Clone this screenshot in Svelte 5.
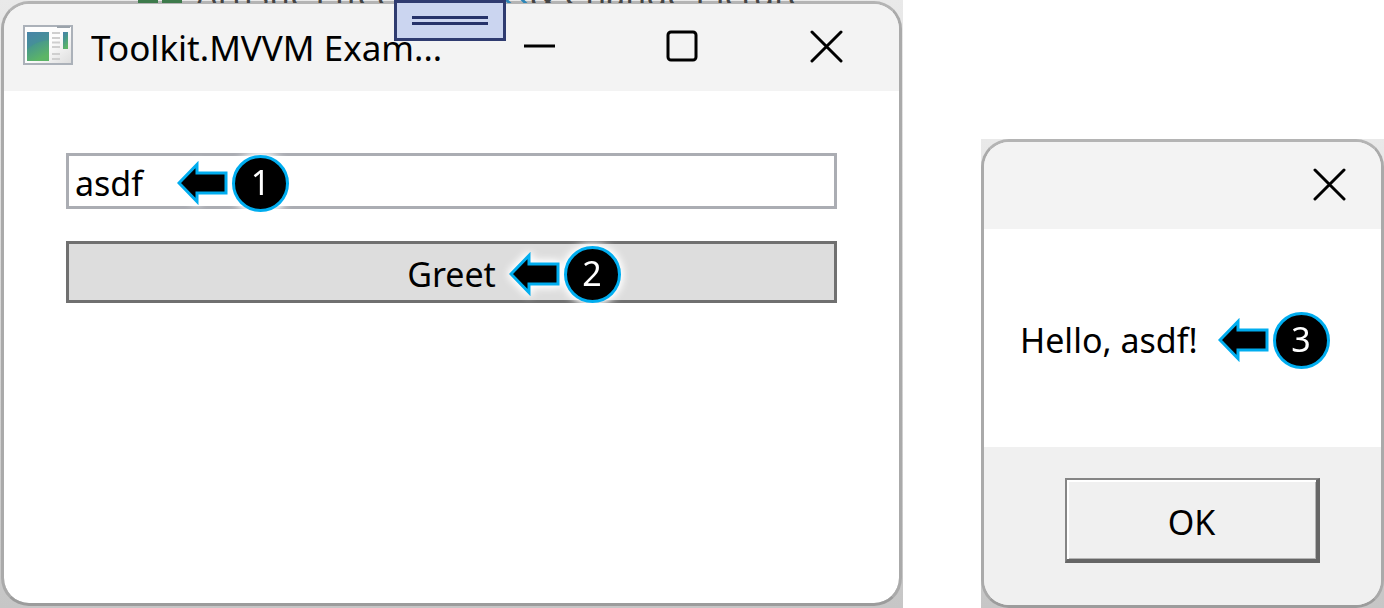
<script lang="ts">
  let name = $state("asdf");
  let greeting = $derived(`Hello, ${name}!`);
</script>

{#snippet closeIcon()}
  <svg width="34" height="34" viewBox="0 0 34 34" fill="none" stroke="#000" stroke-width="3" stroke-linecap="round">
    <path d="M3 2l29 29M32 2L3 31" />
  </svg>
{/snippet}

{#snippet callout(step: number)}
  <span class="callout">
    <svg width="52" height="46" viewBox="0 0 52 46">
      <path d="M2 23L20 4.500V13H49V33H20V41.500Z" fill="#000" stroke="#00adef" stroke-width="3" />
    </svg>
    <span class="step">{step}</span>
  </span>
{/snippet}

<main class="stage">
  <div class="frame">
    <div class="ribbon" aria-hidden="true">
      <span class="tile"></span>
      <span class="tile"></span>
      <span class="ribbon-text effects">Artistic Effects</span>
      <span class="swoosh"></span>
      <span class="ribbon-text">&amp; Change Picture</span>
    </div>
    <section class="window">
      <div class="grip">
        <span></span>
        <span></span>
      </div>
      <header class="titlebar">
        <svg class="app-icon" width="50" height="42" viewBox="0 0 50 42">
          <defs>
            <linearGradient id="pane" x1="0" y1="0" x2="0.4" y2="1">
              <stop offset="0" stop-color="#4a7fae" />
              <stop offset="0.45" stop-color="#46968f" />
              <stop offset="1" stop-color="#5cb566" />
            </linearGradient>
            <linearGradient id="sheet" x1="0" y1="0" x2="1" y2="1">
              <stop offset="0.5" stop-color="#fdfdfd" />
              <stop offset="1" stop-color="#dcdcdc" />
            </linearGradient>
          </defs>
          <rect x="1" y="1" width="48" height="38" fill="url(#sheet)" stroke="#abb1b9" stroke-width="2" />
          <path d="M34 2h13" stroke="#9ba3ab" stroke-width="2" />
          <rect x="4" y="7" width="22" height="29" fill="url(#pane)" />
          <path d="M4 24Q13 16 26 15V7H4Z" fill="#4688a4" opacity="0.5" />
          <path d="M29 8h8M29 13h8M29 17.500h8M29 22h8M29 29h8M29 34h8" stroke="#cfcfcf" stroke-width="2" />
          <rect x="40" y="7" width="5" height="17" fill="url(#pane)" />
        </svg>
        <h1>Toolkit.MVVM Exam...</h1>
        <button class="caption" aria-label="Minimize">
          <svg width="34" height="34" viewBox="0 0 34 34"><path d="M1 16h31" stroke="#000" stroke-width="3" /></svg>
        </button>
        <button class="caption" aria-label="Maximize">
          <svg width="34" height="34" viewBox="0 0 34 34" fill="none">
            <rect x="2" y="2" width="28" height="28" rx="3" stroke="#000" stroke-width="3" />
          </svg>
        </button>
        <button class="caption" aria-label="Close">{@render closeIcon()}</button>
      </header>
      <div class="form">
        <div class="field">
          <input type="text" aria-label="Name" bind:value={name} />
          <div class="mark mark-input">{@render callout(1)}</div>
        </div>
        <div class="field">
          <button class="greet">Greet</button>
          <div class="mark mark-greet">{@render callout(2)}</div>
        </div>
      </div>
    </section>
  </div>

  <div class="frame dialog-frame">
    <section class="window" role="dialog" aria-label="Greeting">
      <header class="titlebar dialog-bar">
        <button class="caption dialog-close" aria-label="Close">{@render closeIcon()}</button>
      </header>
      <div class="message">
        <p>{greeting}</p>
        {@render callout(3)}
      </div>
      <footer>
        <button class="ok">OK</button>
      </footer>
    </section>
  </div>
</main>

<style>
  :global(body) {
    background: #fff;
  }

  .stage {
    display: grid;
    grid-template-columns: 903fr 403fr;
    column-gap: 78px;
    align-items: end;
    min-height: 100vh;
    font-family: "Segoe UI", "Noto Sans", "Open Sans", sans-serif;
    font-size: 34px;
    line-height: 46px;
    color: #000;
  }

  .stage * {
    box-sizing: border-box;
  }

  .frame {
    position: relative;
    display: flex;
    align-self: stretch;
    padding: 1px 1px 2px;
    background: linear-gradient(#e9e9e9, #c6c6c6);
  }

  .dialog-frame {
    align-self: end;
    padding: 0;
  }

  .window {
    position: relative;
    flex: 1;
    display: flex;
    flex-direction: column;
    min-width: 0;
    border: 3px solid;
    border-color: #b4b4b4 #aaa #9c9c9c;
    border-radius: 28px;
    background: #fff;
    background-clip: padding-box;
  }

  /* sliver of the application behind the window */
  .ribbon {
    position: absolute;
    inset: 0 0 auto;
    z-index: 1;
    height: 3px;
    padding-left: 138px;
    display: flex;
    align-items: flex-end;
    gap: 4px;
    overflow: hidden;
  }

  .tile {
    width: 20px;
    height: 3px;
    background: #3d7a4b;
  }

  .ribbon-text {
    margin-bottom: -11px;
    color: #444;
    font-size: 34px;
    line-height: 40px;
    white-space: nowrap;
  }

  .effects {
    margin-left: 10px;
    width: 306px;
  }

  .swoosh {
    width: 20px;
    height: 3px;
    border: solid #2c86b8;
    border-width: 0 4px;
    transform: skewX(45deg);
  }

  .grip {
    position: absolute;
    top: -4px;
    left: 50%;
    z-index: 2;
    transform: translateX(-50%);
    display: flex;
    flex-direction: column;
    justify-content: center;
    gap: 3px;
    width: 112px;
    height: 41px;
    margin-left: -2px;
    padding: 0 15px;
    border: 3px solid #2f3b70;
    background: #cbd5f0;
  }

  .grip span {
    height: 3px;
    background: #26336a;
  }

  .titlebar {
    display: flex;
    align-items: center;
    height: 87px;
    padding: 0 2px 0 19px;
    border-radius: 25px 25px 0 0;
    background: #f3f3f3;
  }

  .app-icon {
    flex: none;
    margin-right: 18px;
    margin-bottom: 4px;
  }

  h1 {
    flex: 1;
    min-width: 0;
    margin: 0;
    overflow: hidden;
    font-size: 35px;
    font-weight: 400;
    white-space: nowrap;
  }

  button,
  input {
    font: inherit;
    color: inherit;
    border-radius: 0;
  }

  .caption {
    display: grid;
    place-items: center;
    flex: none;
    width: 143px;
    height: 100%;
    padding: 0 0 2px;
    border: 0;
    background: none;
  }

  .form {
    display: flex;
    flex-direction: column;
    gap: 32px;
    padding: 62px;
  }

  .field {
    position: relative;
    display: flex;
  }

  input {
    width: 100%;
    height: 56px;
    padding: 4px 6px 0;
    border: 3px solid #abadb3;
    background: #fff;
    outline: none;
  }

  .greet {
    width: 100%;
    height: 62px;
    padding: 4px 0 0;
    border: 3px solid #707070;
    background: #ddd;
  }

  .mark {
    position: absolute;
    inset: 4px auto 0;
    display: flex;
    align-items: center;
    pointer-events: none;
  }

  .mark-input {
    left: 111px;
  }

  .mark-greet {
    left: calc(50% + 57px);
  }

  .callout {
    display: flex;
    align-items: center;
    gap: 3px;
    filter: drop-shadow(0 0 4px #fff) drop-shadow(0 0 3px #fff);
  }

  .step {
    display: grid;
    place-items: center;
    width: 57px;
    height: 57px;
    padding-bottom: 2px;
    border: 3px solid #00adef;
    border-radius: 50%;
    background: #000;
    color: #fff;
    font-size: 34px;
  }

  .dialog-bar {
    justify-content: flex-end;
    padding: 0;
  }

  .dialog-close {
    width: 104px;
  }

  .message {
    display: flex;
    align-items: center;
    gap: 20px;
    height: 218px;
    padding: 4px 36px 0;
  }

  p {
    margin: 0;
    white-space: nowrap;
  }

  footer {
    display: flex;
    justify-content: flex-end;
    padding: 31px 61px 42px;
    border-radius: 0 0 25px 25px;
    background: #f0f0f0;
  }

  .ok {
    width: 255px;
    height: 85px;
    padding: 4px 0 0;
    border: 2px solid #858585;
    border-right: 4px solid #666;
    border-bottom: 4px solid #666;
    background: #f0f0f0;
    box-shadow: inset 2px 2px #fff, inset -1px -1px #b4b4b4;
  }
</style>
